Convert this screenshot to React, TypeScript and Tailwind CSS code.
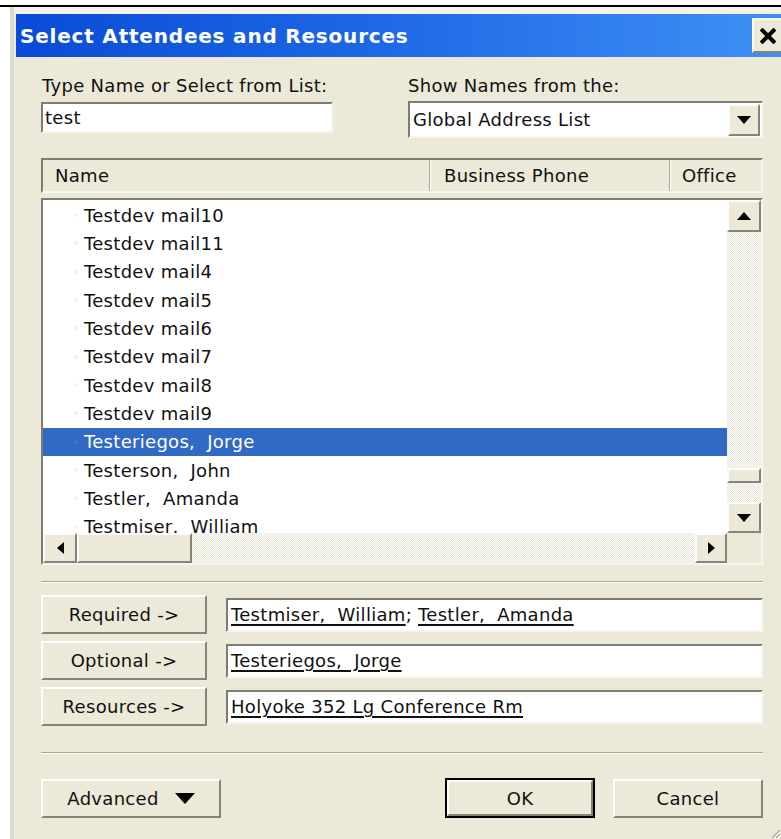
import React from "react";

type Kids = { children?: React.ReactNode; className?: string };

// Classic 3D raised bevel used by buttons and scroll parts
function Raised({ children, className = "" }: Kids) {
  return (
    <div
      className={`border-2 border-t-[#fdfdfb] border-l-[#fdfdfb] border-b-[#85837a] border-r-[#85837a] bg-[#ece9d8] ${className}`}
    >
      {children}
    </div>
  );
}

// Classic 3D sunken frame used by edit fields and lists
function Sunken({ children, className = "" }: Kids) {
  return (
    <div
      className={`border-2 border-t-[#7f7d73] border-l-[#7f7d73] border-b-[#f6f5f0] border-r-[#f6f5f0] ${className}`}
    >
      {children}
    </div>
  );
}

function Arrow({ dir }: { dir: "up" | "down" | "left" | "right" }) {
  if (dir === "up")
    return (
      <svg width="14" height="8" viewBox="0 0 14 8">
        <polygon points="0,8 14,8 7,0" fill="#000" />
      </svg>
    );
  if (dir === "down")
    return (
      <svg width="14" height="8" viewBox="0 0 14 8">
        <polygon points="0,0 14,0 7,8" fill="#000" />
      </svg>
    );
  if (dir === "left")
    return (
      <svg width="7" height="12" viewBox="0 0 7 12">
        <polygon points="7,0 7,12 0,6" fill="#000" />
      </svg>
    );
  return (
    <svg width="7" height="12" viewBox="0 0 7 12">
      <polygon points="0,0 0,12 7,6" fill="#000" />
    </svg>
  );
}

const names = [
  "Testdev mail10",
  "Testdev mail11",
  "Testdev mail4",
  "Testdev mail5",
  "Testdev mail6",
  "Testdev mail7",
  "Testdev mail8",
  "Testdev mail9",
  "Testeriegos,  Jorge",
  "Testerson,  John",
  "Testler,  Amanda",
  "Testmiser,  William",
];

const track =
  "bg-[repeating-conic-gradient(#e9e7dc_0_25%,#fbfbf7_0_50%)] bg-[length:2px_2px]";

function RecipientRow({ label, children }: { label: string; children: React.ReactNode }) {
  return (
    <div className="flex items-center gap-[19px] h-[39px]">
      <Raised className="w-[166px] h-[39px] flex items-center justify-center">
        <span>{label}</span>
      </Raised>
      <Sunken className="flex-1 h-[34px] bg-white flex items-center pl-[3px] whitespace-pre">
        {children}
      </Sunken>
    </div>
  );
}

function U({ children }: { children: React.ReactNode }) {
  return <span className="underline decoration-[1.5px] underline-offset-[3px] whitespace-pre">{children}</span>;
}

export default function App() {
  return (
    <div className="w-[781px] h-[839px] bg-white overflow-hidden flex flex-col relative font-['DejaVu_Sans',sans-serif] text-[18px] tracking-[0.3px] text-[#111]">
      <div className="h-[5px] shrink-0" />
      <div className="h-[2px] bg-black shrink-0" />

      {/* dialog window */}
      <div className="ml-[10px] flex-1 flex flex-col border-l-4 border-[#dcd9cd] bg-[#ece9d8]">
        <div className="h-[7px] bg-[#f3f2ec] shrink-0" />

        {/* title bar */}
        <div className="ml-[2px] h-[43px] shrink-0 flex items-center bg-linear-to-r from-[#0a4bd7] via-[#1f6ae6] to-[#3f90f5]">
          <div className="flex-1 pl-[4px] text-white font-bold text-[20px] tracking-[0.8px] leading-none">
            Select Attendees and Resources
          </div>
          <Raised className="w-[29px] h-[35px] flex items-center justify-center border-r-0">
            <svg width="16" height="16" viewBox="0 0 16 16">
              <path d="M2.5 2.5 L13.5 13.5 M13.5 2.5 L2.5 13.5" stroke="#000" strokeWidth="4" strokeLinecap="square" />
            </svg>
          </Raised>
        </div>

        {/* body */}
        <div className="flex flex-col pl-[27px] pr-[18px] pt-[18px]">
          {/* name entry and address book */}
          <div className="flex gap-[75px]">
            <div className="w-[292px] flex flex-col">
              <div className="h-[21px] leading-[21px] pl-[1px]">Type Name or Select from List:</div>
              <Sunken className="mt-[6px] h-[31px] bg-white flex items-center pl-[2px]">test</Sunken>
            </div>
            <div className="flex-1 flex flex-col">
              <div className="h-[21px] leading-[21px]">Show Names from the:</div>
              <Sunken className="mt-[5px] h-[37px] bg-white flex items-center">
                <span className="flex-1 pl-[3px]">Global Address List</span>
                <Raised className="w-[32px] h-[32px] mr-[1px] flex items-center justify-center">
                  <Arrow dir="down" />
                </Raised>
              </Sunken>
            </div>
          </div>

          {/* column header */}
          <Sunken className="mt-[20px] h-[35px] flex items-stretch bg-[#ece9d8] border-b-[#e2dfd2]">
            <div className="w-[387px] flex items-center pl-[12px] border-r border-[#aca899]">Name</div>
            <div className="w-[240px] flex items-center pl-[13px] border-l border-white border-r border-r-[#aca899]">
              Business Phone
            </div>
            <div className="flex-1 flex items-center pl-[11px] border-l border-white">Office</div>
          </Sunken>

          {/* list of names */}
          <Sunken className="mt-[5px] h-[367px] bg-white flex flex-col">
            <div className="flex h-[333px]">
              <div className="flex-1 overflow-hidden pt-[1px]">
                {names.map((n, i) => (
                  <div
                    key={n}
                    className={`h-[28.33px] flex items-center whitespace-pre ${
                      i === 8 ? "bg-[#316ac5] text-white" : ""
                    }`}
                  >
                    <span className={`ml-[31px] mr-[6px] w-[4px] h-[4px] rounded-full ${i === 8 ? "bg-[#4677c9]" : "bg-[#f3f3f3]"}`} />
                    <span>{n}</span>
                  </div>
                ))}
              </div>
              <div className={`w-[34px] flex flex-col ${track}`}>
                <Raised className="h-[32px] flex items-center justify-center">
                  <Arrow dir="up" />
                </Raised>
                <div className="h-[236px]" />
                <Raised className="h-[15px]" />
                <div className="flex-1" />
                <Raised className="h-[31px] flex items-center justify-center">
                  <Arrow dir="down" />
                </Raised>
              </div>
            </div>
            <div className="flex h-[30px]">
              <div className={`flex-1 flex ${track}`}>
                <Raised className="w-[34px] flex items-center justify-center">
                  <Arrow dir="left" />
                </Raised>
                <Raised className="w-[115px]" />
                <div className="flex-1" />
                <Raised className="w-[32px] flex items-center justify-center">
                  <Arrow dir="right" />
                </Raised>
              </div>
              <div className="w-[34px] bg-[#ece9d8]" />
            </div>
          </Sunken>

          <div className="mt-[16px] h-[2px] border-t border-[#aca899] border-b border-b-white" />

          {/* recipients */}
          <div className="mt-[12px] flex flex-col gap-[7px]">
            <RecipientRow label="Required ->">
              <U>Testmiser,  William</U>
              <span>; </span>
              <U>Testler,  Amanda</U>
            </RecipientRow>
            <RecipientRow label="Optional ->">
              <U>Testeriegos,  Jorge</U>
            </RecipientRow>
            <RecipientRow label="Resources ->">
              <U>Holyoke 352 Lg Conference Rm</U>
            </RecipientRow>
          </div>

          <div className="mt-[26px] h-[2px] border-t border-[#aca899] border-b border-b-white" />

          {/* dialog buttons */}
          <div className="mt-[24px] flex items-center">
            <Raised className="w-[180px] h-[39px] flex items-center justify-center gap-[16px]">
              <span>Advanced</span>
              <svg width="20" height="11" viewBox="0 0 20 11">
                <polygon points="0,0 20,0 10,11" fill="#000" />
              </svg>
            </Raised>
            <div className="flex-1" />
            <div className="w-[150px] h-[40px] border-2 border-black">
              <Raised className="h-full flex items-center justify-center">OK</Raised>
            </div>
            <Raised className="ml-[18px] w-[150px] h-[39px] flex items-center justify-center">Cancel</Raised>
          </div>
        </div>
      </div>

      {/* size grip */}
      <svg className="absolute right-0 bottom-0" width="12" height="12" viewBox="0 0 12 12">
        <path d="M11 3 L3 11 M11 7 L7 11" stroke="#aca899" strokeWidth="1.2" />
        <path d="M12 4 L4 12 M12 8 L8 12" stroke="#fff" strokeWidth="1" />
      </svg>
    </div>
  );
}
